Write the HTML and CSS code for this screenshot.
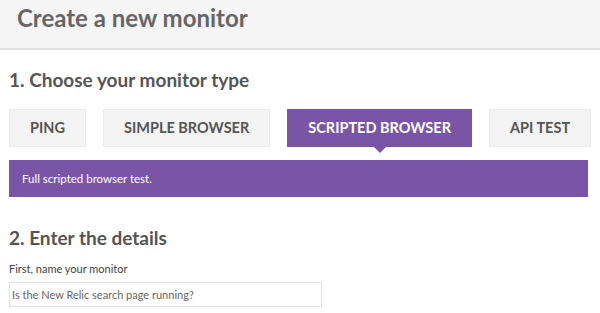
FILE: index.html
```html
<!DOCTYPE html>
<html lang="en">

<head>
    <meta charset="UTF-8">
    <title>Create a new monitor</title>
    <link rel="stylesheet" href="styles.css">
</head>

<body>
    <div class="page-header">
        <h1>Create a new monitor</h1>
    </div>
    <div class="content">
        <h2>1. Choose your monitor type</h2>
        <div class="type-list">
            <span class="type-item">PING</span>
            <span class="type-item">SIMPLE BROWSER</span>
            <span class="type-item active">SCRIPTED BROWSER</span>
            <span class="type-item">API TEST</span>
        </div>
        <div class="type-desc">Full scripted browser test.</div>

        <h2>2. Enter the details</h2>
        <label class="field-label">First, name your monitor</label>
        <input class="field-input" type="text" placeholder="Is the New Relic search page running?">
    </div>
</body>

</html>
```

FILE: styles.css
```css
* {
    margin: 0;
    padding: 0;
    box-sizing: border-box;
}

body {
    font-family: Lato, "Open Sans", "Liberation Sans", sans-serif;
    color: #555;
    background-color: #fff;
}

.page-header {
    height: 50px;
    padding: 3px 17px 0;
    background-color: #f5f5f5;
    border-bottom: 2px solid #e0e0e0;
}

.page-header h1 {
    font-size: 24px;
    font-weight: 700;
    color: #666;
    line-height: 30px;
}

.content {
    padding: 0 12px 0 9px;
}

.content h2 {
    font-size: 19px;
    font-weight: 700;
    color: #555;
    line-height: 26px;
    margin-top: 17px;
}

.type-list {
    display: flex;
    gap: 17px;
    margin-top: 16px;
}

.type-item {
    position: relative;
    height: 38px;
    line-height: 36px;
    padding: 0 20px;
    font-size: 14.5px;
    font-weight: 700;
    color: #555;
    white-space: nowrap;
    background-color: #f4f4f4;
    border: 1px solid #ececec;
}

.type-item.active {
    color: #fff;
    background-color: #7a55a5;
    border-color: #7a55a5;
}

.type-item.active::after {
    content: "";
    position: absolute;
    left: 50%;
    bottom: -7px;
    margin-left: -7px;
    border-left: 7px solid transparent;
    border-right: 7px solid transparent;
    border-top: 7px solid #7a55a5;
}

.type-desc {
    margin-top: 13px;
    height: 37px;
    line-height: 37px;
    padding: 0 13px;
    font-size: 11.5px;
    color: #fff;
    background-color: #7a55a5;
}

.content .type-desc + h2 {
    margin-top: 28px;
}

.field-label {
    display: block;
    margin-top: 11px;
    font-size: 11px;
    color: #444;
}

.field-input {
    display: block;
    margin-top: 7px;
    width: 313px;
    height: 25px;
    padding: 0 2px;
    font-family: inherit;
    font-size: 11px;
    border: 1px solid #e2e2e2;
    outline: none;
}

.field-input::placeholder {
    color: #666;
}
```
